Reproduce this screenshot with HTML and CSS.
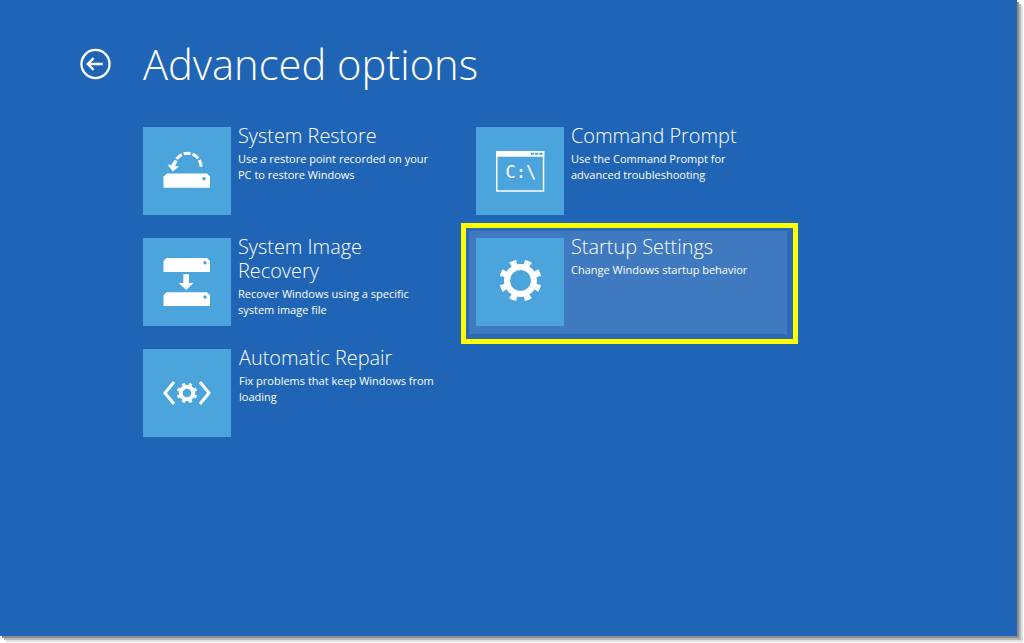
FILE: index.html
```html
<!DOCTYPE html>
<html lang="en">
<head>
<meta charset="utf-8">
<title>Advanced options</title>
<link rel="stylesheet" href="styles.css">
</head>
<body>
<main class="screen">
  <header class="head">
    <svg class="back" viewBox="0 0 32 32" aria-hidden="true">
      <circle cx="16" cy="16" r="14.500"/>
      <path d="M23.500 16H8M14 10l-6 6 6 6"/>
    </svg>
    <h1 class="title">Advanced options</h1>
  </header>
  <section class="grid">
    <div class="tile">
      <div class="icon">
        <svg viewBox="0 0 88 88" aria-hidden="true">
          <path class="dash" d="M33.500 32A13.500 13.500 0 0 1 58 41"/>
          <path class="solid" d="M31.500 33l3 1-2.200 5 3.700.5-6.300 5-5.200-7 3.800.4z"/>
          <path class="solid" fill-rule="evenodd" d="M24 46.500H64L67 49.500V60.700H20.500V49.500zM61 50a1.700 1.700 0 1 0 .01 0z"/>
        </svg>
      </div>
      <div class="text">
        <h2>System Restore</h2>
        <p>Use a restore point recorded on your PC to restore Windows</p>
      </div>
    </div>
    <div class="tile">
      <div class="icon">
        <svg viewBox="0 0 88 88" aria-hidden="true">
          <path class="cmd" d="M20.750 25h46.800v39H20.750z"/>
          <path class="solid" d="M20 24h48.300v5.700H20z"/>
          <path class="blue" d="M54.700 25.700H58v2h-3.300zM59 25.700h3.300v2H59zM63.300 25.700h3.400v2h-3.400z"/>
          <text class="prompt" x="44.800" y="50.500">C:\</text>
        </svg>
      </div>
      <div class="text">
        <h2>Command Prompt</h2>
        <p>Use the Command Prompt for<br>advanced troubleshooting</p>
      </div>
    </div>
    <div class="tile">
      <div class="icon">
        <svg viewBox="0 0 88 88" aria-hidden="true">
          <path class="solid" fill-rule="evenodd" d="M23.500 20H64L67 23V34H20.500V23zM62 23a1.700 1.700 0 1 0 .01 0z"/>
          <path class="solid" d="M40.300 36.300H46V45h4.500L43.200 52 35.700 45h4.600z"/>
          <path class="solid" fill-rule="evenodd" d="M23.500 54.300H64L67 57.300V68H20.500V57.300zM62 57.300a1.700 1.700 0 1 0 .01 0z"/>
        </svg>
      </div>
      <div class="text">
        <h2>System Image<br>Recovery</h2>
        <p>Recover Windows using a specific system image file</p>
      </div>
    </div>
    <div class="tile selected">
      <div class="icon">
        <svg viewBox="0 0 88 88" aria-hidden="true">
          <circle class="ring" cx="44.500" cy="42.500" r="13.500"/>
          <circle class="teeth" cx="44.500" cy="42.500" r="18" pathLength="80"/>
        </svg>
      </div>
      <div class="text">
        <h2>Startup Settings</h2>
        <p>Change Windows startup behavior</p>
      </div>
    </div>
    <div class="tile repair">
      <div class="icon">
        <svg viewBox="0 0 88 88" aria-hidden="true">
          <path class="chev" d="M31 33L22 44l9 11M57 33l9 11-9 11"/>
          <circle class="ring small" cx="44" cy="44" r="6.300"/>
          <circle class="teeth small" cx="44" cy="44" r="8.800" pathLength="80"/>
        </svg>
      </div>
      <div class="text">
        <h2>Automatic Repair</h2>
        <p>Fix problems that keep Windows from loading</p>
      </div>
    </div>
  </section>
</main>
</body>
</html>
```
FILE: styles.css
```css
* { box-sizing: border-box; }
html, body { margin: 0; padding: 0; height: 100%; background: #fff; overflow: hidden; }
.screen {
  width: 1017px;
  height: 636px;
  background: #2065b5;
  box-shadow: 2px 2px 0 #8d8d8d, 4px 4px 0 #b8b8b8, 6px 6px 0 #e0e0e0;
  color: #fff;
  font-family: "Open Sans", "Liberation Sans", sans-serif;
  padding: 37px 0 0 80px;
}
.head { display: flex; align-items: center; height: 54px; gap: 32px; }
.back { width: 31px; height: 32px; flex: none; fill: none; stroke: #fff; stroke-width: 2.400; }
.title { margin: 0; font-size: 41.700px; font-weight: 300; line-height: 54px; white-space: nowrap; }
.grid {
  display: grid;
  grid-template-columns: 333px 333px;
  grid-auto-rows: 88px;
  row-gap: 23px;
  margin: 36px 0 0 63px;
}
.tile { display: flex; gap: 7px; }
.icon { width: 88px; height: 88px; flex: none; background: #4ba5dc; }
.icon svg { display: block; width: 88px; height: 88px; }
.text { min-width: 0; width: 198px; }
.text h2 { margin: -3px 0 0; font-size: 19.900px; font-weight: 300; line-height: 24px; white-space: nowrap; }
.text p { margin: 3px 0 0; font-size: 11px; line-height: 16px; font-weight: 400; }
.repair .text { margin-left: 1px; }
.selected {
  margin: -10px 16px -13px -10px;
  padding: 7px 8px 8px 7px;
  background: #3f79c0;
  border-style: solid;
  border-color: #2c69b6;
  border-width: 3px 6px 5px 3px;
  outline: 5px solid #ffff00;
  grid-row: 2;
  grid-column: 2;
}
.solid { fill: #fff; }
.blue { fill: #4ba5dc; }
.dash { fill: none; stroke: #fff; stroke-width: 3; stroke-dasharray: 7 2; }
.cmd { fill: none; stroke: #fff; stroke-width: 1.500; }
.prompt { fill: #fff; font-family: "DejaVu Sans Mono", monospace; font-size: 17px; text-anchor: middle; }
.ring { fill: none; stroke: #fff; stroke-width: 6; }
.teeth { fill: none; stroke: #fff; stroke-width: 6; stroke-dasharray: 4.500 5.500; stroke-dashoffset: -2.750; }
.ring.small { stroke-width: 4; }
.teeth.small { stroke-width: 3; }
.chev { fill: none; stroke: #fff; stroke-width: 3; }
```
